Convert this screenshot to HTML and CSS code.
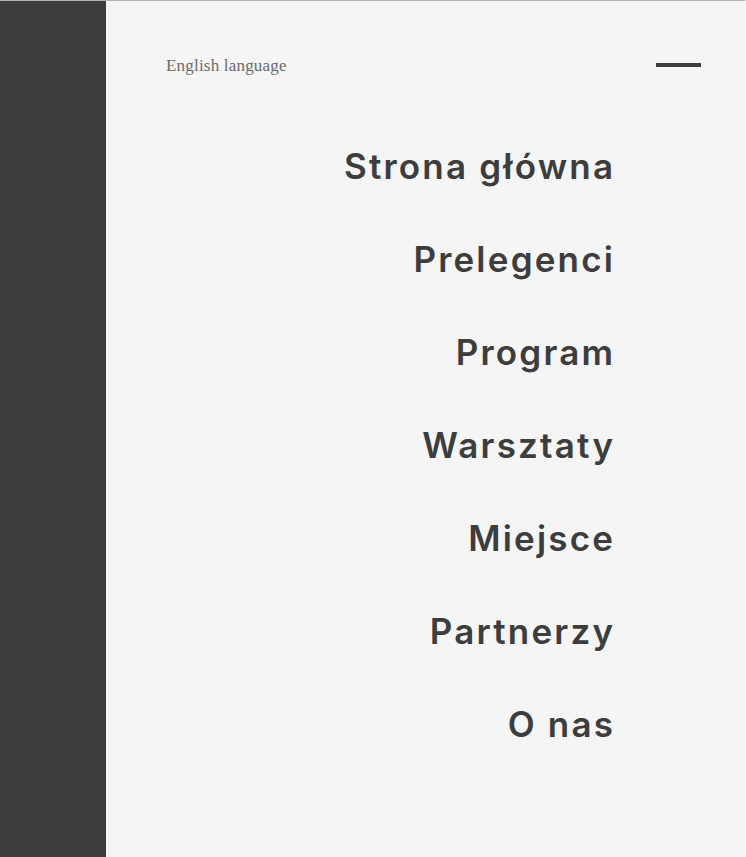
FILE: index.html
```html
<!DOCTYPE html>
<html lang="pl">
<head>
<meta charset="utf-8">
<link rel="stylesheet" href="styles.css">
</head>
<body>
<div class="page">
  <aside class="side"></aside>
  <main class="panel">
    <header class="top">
      <a class="lang" href="#">English language</a>
      <span class="burger"></span>
    </header>
    <nav class="menu">
      <a href="#">Strona główna</a>
      <a href="#">Prelegenci</a>
      <a href="#">Program</a>
      <a href="#">Warsztaty</a>
      <a href="#">Miejsce</a>
      <a href="#">Partnerzy</a>
      <a href="#">O nas</a>
    </nav>
  </main>
</div>
</body>
</html>
```
FILE: styles.css
```css
html, body {
  margin: 0;
  height: 100%;
  background: #f5f5f5;
}
.page {
  display: flex;
  height: 100vh;
  box-sizing: border-box;
  border-top: 1px solid #b3b3b3;
  border-right: 1px solid #fafafa;
}
.side {
  width: 106px;
  flex: none;
  background: #3d3d3d;
}
.panel {
  flex: 1;
  background: #f5f5f5;
  display: flex;
  flex-direction: column;
}
.top {
  display: flex;
  justify-content: space-between;
  align-items: center;
  padding: 54px 44px 0 60px;
  height: 22px;
}
.lang {
  font-family: "Liberation Serif", serif;
  font-size: 17px;
  color: #6a6a6a;
  text-decoration: none;
  letter-spacing: 0.2px;
}
.burger {
  width: 45px;
  height: 4px;
  background: #3d3d3d;
  margin-top: -2px;
}
.menu {
  display: flex;
  flex-direction: column;
  align-items: flex-end;
  padding: 67px 132px 0 0;
  gap: 49px;
}
.menu a {
  font-family: "Inter", "Noto Sans", sans-serif;
  font-weight: 600;
  font-size: 35px;
  line-height: 44px;
  letter-spacing: 2.2px;
  margin-right: -2.2px;
  color: #3d3d3d;
  text-decoration: none;
}
```
